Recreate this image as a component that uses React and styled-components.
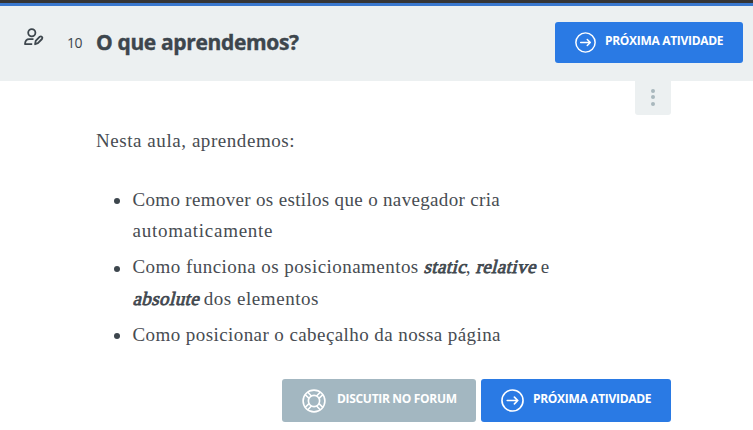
import React from 'react';
import styled, { createGlobalStyle } from 'styled-components';

const GlobalStyle = createGlobalStyle`
  * { box-sizing: border-box; }
  body { margin: 0; background: #fff; color: #3d464d; overflow: hidden; }
`;

const Page = styled.div`
  width: 753px;
  height: 430px;
  display: flex;
  flex-direction: column;
  font-family: 'Open Sans', sans-serif;
`;

const Header = styled.header`
  height: 75px;
  flex: none;
  display: flex;
  align-items: flex-start;
  padding: 0 10px 0 23px;
  background: #ecf0f1;
`;

const TopBar = styled.div`
  height: 6px;
  flex: none;
  background: #353535;
  border-bottom: 3px solid #3a78ce;
`;

const ActivityIcon = styled.svg`
  width: 22px;
  height: 20px;
  margin-top: 21px;
  flex: none;
`;

const TaskNumber = styled.span`
  width: 29px;
  margin: 27px 0 0 22px;
  font-size: 14px;
  line-height: 20px;
  letter-spacing: -0.4px;
`;

const Title = styled.h1`
  flex: 1;
  margin: 21px 0 0;
  font-size: 21px;
  line-height: 30px;
  font-weight: 700;
  letter-spacing: -0.35px;
  -webkit-text-stroke: 0.4px #3d464d;
`;

const Button = styled.button`
  display: flex;
  align-items: center;
  flex: none;
  width: ${(p) => p.$width}px;
  height: ${(p) => p.$height}px;
  margin-top: ${(p) => p.$top || 0}px;
  padding: 0 0 0 20px;
  gap: ${(p) => p.$gap || 9}px;
  border: 0;
  border-radius: 3px;
  background: ${(p) => (p.$muted ? '#a3b7c1' : '#2a7ae4')};
  color: #fff;
  font: 700 12px/20px 'Open Sans', sans-serif;
  letter-spacing: -0.31px;
  white-space: nowrap;
`;

const ButtonIcon = styled.svg`
  width: ${(p) => p.$size}px;
  height: ${(p) => p.$size}px;
  flex: none;
`;

const Label = styled.span`
  padding-bottom: 3px;
`;

const Content = styled.main`
  width: 575px;
  margin-left: 96px;
  display: flex;
  flex-direction: column;
`;

const MenuButton = styled.button`
  align-self: flex-end;
  display: flex;
  flex-direction: column;
  align-items: center;
  width: 36px;
  height: 34px;
  padding: 8px 0 0;
  gap: 2.3px;
  border: 0;
  border-radius: 0 0 3px 3px;
  background: #ecf0f1;
`;

const Dot = styled.i`
  width: 4px;
  height: 4px;
  border-radius: 50%;
  background: #a9b8bd;
`;

const Article = styled.article`
  font: 19px/31.5px 'Liberation Serif', serif;
  color: #474c52;
`;

const Intro = styled.p`
  margin: 10px 0 27px;
  letter-spacing: ${(p) => p.$track}px;
`;

const List = styled.ul`
  list-style: none;
  margin: 0;
  padding: 0;
  display: flex;
  flex-direction: column;
  gap: 4.5px;
`;

const Item = styled.li`
  display: flex;
  &::before {
    content: '';
    flex: none;
    width: 6px;
    height: 6px;
    border-radius: 50%;
    margin: 14.5px 12.5px 0 18px;
    background: #3d464d;
  }
`;

const Line = styled.span`
  display: block;
  white-space: pre;
  letter-spacing: ${(p) => p.$track}px;
`;

const Term = styled.em`
  display: inline-block;
  font-style: normal;
  letter-spacing: 0.42px;
  margin: 0 -1.8px 0 1px;
  transform: skewX(-14deg);
  -webkit-text-stroke: 0.8px #3d464d;
`;

const Actions = styled.div`
  display: flex;
  justify-content: flex-end;
  gap: 5px;
  margin-top: 29px;
`;

const ArrowIcon = ({ size }) => (
  <ButtonIcon $size={size} viewBox="0 0 24 24" fill="none" stroke="#fff" strokeWidth="1.7" strokeLinecap="round" strokeLinejoin="round">
    <circle cx="12" cy="12" r="11" />
    <path d="M6.5 12h11M14 8.5l3.5 3.5-3.5 3.5" />
  </ButtonIcon>
);

const BuoyIcon = () => (
  <ButtonIcon $size={24} viewBox="0 0 24 24" fill="none" stroke="#fff" strokeWidth="1.6">
    <circle cx="12" cy="12" r="10.9" />
    <circle cx="12" cy="12" r="5.6" />
    <path d="M9.4 7 5.8 3.3M7 9.4 3.3 5.8M14.6 7l3.6-3.7M17 9.4l3.7-3.6M9.4 17l-3.6 3.7M7 14.6l-3.7 3.6M14.6 17l3.6 3.7M17 14.6l3.7 3.6" />
  </ButtonIcon>
);

export default function App() {
  return (
    <Page>
      <GlobalStyle />
      <TopBar />
      <Header>
        <ActivityIcon viewBox="0 0 22 20" fill="none" stroke="#3d464d" strokeWidth="1.8" strokeLinejoin="round">
          <circle cx="8.8" cy="5.8" r="3.6" />
          <path d="M10.5 12.2H6.2c-2.6 0-4 1.6-4.2 4.9h7.2" />
          <path d="m12.1 17.2.6-3.3 4.1-4.2c1.5-1.1 3.4.8 2.2 2.3l-4.1 4.2Z" />
        </ActivityIcon>
        <TaskNumber>10</TaskNumber>
        <Title>O que aprendemos?</Title>
        <Button $width={188} $height={41} $top={16}>
          <ArrowIcon size={21} />
          <Label>PRÓXIMA ATIVIDADE</Label>
        </Button>
      </Header>
      <Content>
        <MenuButton aria-label="Menu"><Dot /><Dot /><Dot /></MenuButton>
        <Article>
          <Intro $track={0.56}>Nesta aula, aprendemos:</Intro>
          <List>
            <Item>
              <div>
                <Line $track={0.33}>Como remover os estilos que o navegador cria</Line>
                <Line $track={0.73}>automaticamente</Line>
              </div>
            </Item>
            <Item>
              <div>
                <Line $track={0.45}>Como funciona os posicionamentos <Term>static</Term>, <Term>relative</Term> e</Line>
                <Line $track={0.55}><Term>absolute</Term> dos elementos</Line>
              </div>
            </Item>
            <Item>
              <Line $track={0.42}>Como posicionar o cabeçalho da nossa página</Line>
            </Item>
          </List>
        </Article>
        <Actions>
          <Button $muted $width={194} $height={43} $gap={11}>
            <BuoyIcon />
            <Label>DISCUTIR NO FORUM</Label>
          </Button>
          <Button $width={190} $height={43}>
            <ArrowIcon size={23} />
            <Label>PRÓXIMA ATIVIDADE</Label>
          </Button>
        </Actions>
      </Content>
    </Page>
  );
}
